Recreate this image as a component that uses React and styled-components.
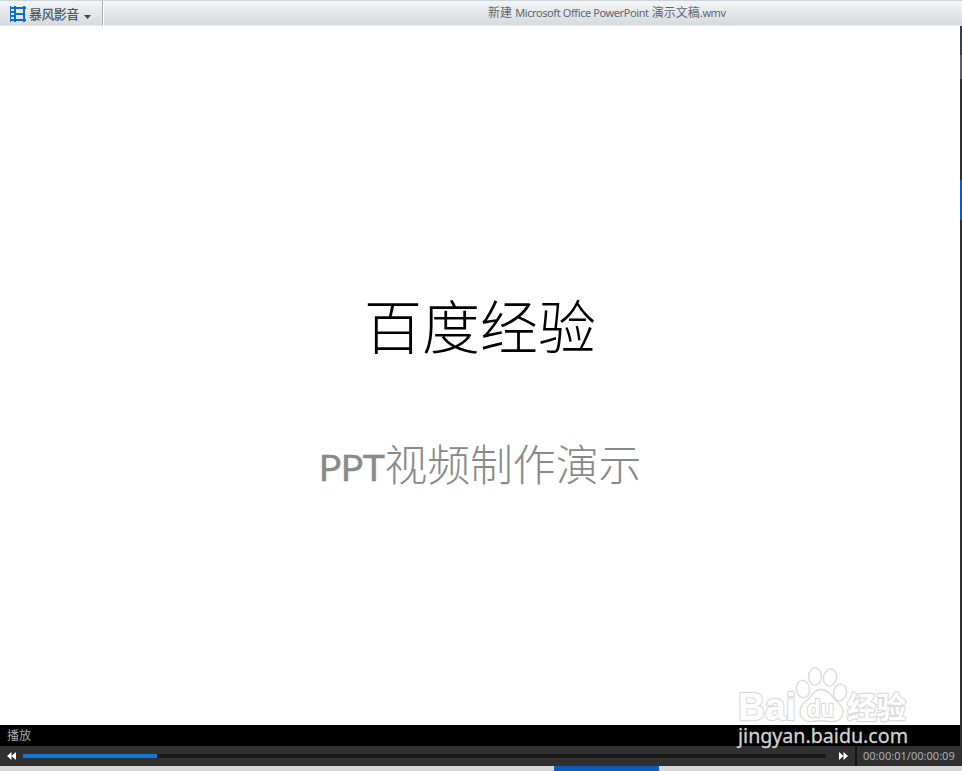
import React from "react";
import styled, { createGlobalStyle, ThemeProvider } from "styled-components";

const theme = {
    colours: {
        black: "#000",
        white: "#fff",
        blue1: "#0c5bbd",
        blue2: "#1178d3",
        grey1: "#d6d6d6",
        grey2: "#898989",
        grey3: "#303030",
        outline: "#dadada",
        text: "#4c5663",
    },
    fonts: {
        ui: `"Noto Sans", "Noto Sans CJK SC", sans-serif`,
        slide: `Lato, "Noto Sans CJK SC", sans-serif`,
    },
};

const GlobalStyle = createGlobalStyle`
  * {
    box-sizing: border-box;
  }
  body {
    margin: 0;
    overflow: hidden;
  }
`;

const Player = styled.div`
  background: ${({ theme }) => theme.colours.white};
  display: flex;
  flex-direction: column;
  font-family: ${({ theme }) => theme.fonts.ui};
  height: 771px;
  position: relative;
  width: 962px;
`;

const TitleBar = styled.header`
  background: linear-gradient(#f4f5f6, #d5dade);
  border-bottom: 1px solid #e2e6e9;
  border-top: 1px solid #ccd3d9;
  display: flex;
  flex: 0 0 26px;
`;

const Brand = styled.div`
  align-items: center;
  border-right: 1px solid #aaafb5;
  box-shadow: 1px 0 ${({ theme }) => theme.colours.white};
  color: ${({ theme }) => theme.colours.text};
  display: flex;
  padding: 2px 0 0 10px;
  width: 103px;
`;

const BrandName = styled.span`
  font-size: 13px;
  font-weight: 500;
  letter-spacing: -0.6px;
  line-height: 20px;
  margin: 0 5px 0 3px;
`;

const FileName = styled.div`
  color: #606671;
  font-size: 12px;
  line-height: 24px;
  padding-left: 385px;
  white-space: nowrap;
`;

const Run = styled.span`
  font-size: 11px;
  letter-spacing: ${({ tracking }) => tracking}px;
`;

const Content = styled.div`
  display: flex;
  flex: 0 0 740px;
`;

const Main = styled.div`
  display: flex;
  flex: 1;
  flex-direction: column;
`;

const Slide = styled.main`
  align-items: center;
  display: flex;
  flex: 0 0 699px;
  flex-direction: column;
  font-family: ${({ theme }) => theme.fonts.slide};
  padding-top: 261px;
`;

const SlideTitle = styled.h1`
  color: ${({ theme }) => theme.colours.black};
  font-size: 58px;
  font-weight: 300;
  line-height: 80px;
  margin: 0 0 66px;
`;

const SlideSubtitle = styled.p`
  align-items: baseline;
  color: ${({ theme }) => theme.colours.grey2};
  display: flex;
  font-size: 42.8px;
  font-weight: 300;
  line-height: 64px;
  margin: 0;
`;

const Latin = styled.span`
  font-size: 37.5px;
  font-weight: 400;
  letter-spacing: -0.5px;
  -webkit-text-stroke: 0.4px ${({ theme }) => theme.colours.grey2};
`;

const StatusBar = styled.div`
  background: ${({ theme }) => theme.colours.black};
  color: #aaa;
  flex: 0 0 21px;
  font-size: 12px;
  line-height: 20px;
  padding: 1px 0 0 7px;
`;

const Controls = styled.div`
  align-items: center;
  background: ${({ theme }) => theme.colours.grey3};
  display: flex;
  flex: 0 0 20px;
  padding-left: 7px;
`;

const Track = styled.div`
  background: #191919;
  border-bottom: 1px solid #353535;
  height: 5px;
  margin: 0 12px 0 6px;
  width: 803px;
`;

const Progress = styled.div`
  background: ${({ theme }) => theme.colours.blue2};
  height: 4px;
`;

const Time = styled.div`
  border-left: 2px solid #151515;
  color: #aab0b5;
  font-size: 11px;
  height: 20px;
  letter-spacing: 0.02px;
  line-height: 20px;
  margin-left: 7px;
  padding-left: 6px;
  white-space: nowrap;
`;

const Edge = styled.div`
  display: flex;
  flex: 0 0 2px;
  flex-direction: column;
`;

const EdgePart = styled.div`
  background: ${({ background }) => background};
  flex: 0 0 ${({ size }) => size}px;
`;

const Footer = styled.footer`
  background: ${({ theme }) => theme.colours.grey1};
  border-bottom: 1px solid #f0f0f0;
  flex: 0 0 5px;
  padding-left: 554px;
`;

const FooterTab = styled.div`
  background: ${({ theme }) => theme.colours.blue1};
  height: 5px;
  width: 105px;
`;

const WatermarkSvg = styled.svg`
  left: 725px;
  position: absolute;
  top: 655px;
`;

const FilmIcon = () => (
    <svg width="16" height="16" viewBox="0 0 16 16" shapeRendering="crispEdges">
        <path
            fill="#126bc5"
            d="M4 0h2v16H4zM13 0h2v16h-2zM6 1h7v2H6zM6 7h7v2H6zM6 13h7v2H6zM0 1h4v2H0zM0 5h4v2H0zM0 9h4v2H0zM0 13h4v2H0zM15 1h1v2h-1zM15 13h1v2h-1z"
        />
        <path fill="#126bc5" d="M0 0h1v16H0z" />
    </svg>
);

const Caret = () => (
    <svg width="7" height="4" viewBox="0 0 7 4" style={{ marginTop: 6 }}>
        <path fill="#404951" d="M0 0h7L3.5 4z" />
    </svg>
);

const Skip = ({ forward }) => (
    <svg width="10" height="8" viewBox="0 0 10 8">
        <path
            fill="#fff"
            d={forward ? "M1 0l4.500 4L1 8zM5.500 0L10 4 5.500 8z" : "M4.500 0v8L0 4zM9 0v8L4.500 4z"}
        />
    </svg>
);

const Watermark = () => (
    <WatermarkSvg width="190" height="96" viewBox="0 0 190 96">
        <g fill="#fff" stroke={theme.colours.outline} strokeWidth="1.4">
            <ellipse cx="90" cy="21.5" rx="6.3" ry="8.8" />
            <ellipse cx="105" cy="22.5" rx="6.5" ry="8.7" transform="rotate(12 105 22.5)" />
            <ellipse cx="78" cy="34" rx="6.5" ry="8.8" transform="rotate(-10 78 34)" />
            <ellipse cx="115" cy="37.5" rx="6.5" ry="8.6" transform="rotate(12 115 37.5)" />
            <path d="M96 34.5c-7 0-9 6-13 10-5 4-8.5 7-8 13 .5 7 6 10 13 9 5-1 10-1 16 0 8 1 14-2 14-10 0-5-4-8-8-12s-7-10-14-10z" />
        </g>
        <g
            fill="#fff"
            stroke={theme.colours.outline}
            strokeWidth="2.4"
            paintOrder="stroke"
            strokeLinejoin="round"
            fontFamily="Liberation Sans, sans-serif"
            fontWeight="700"
        >
            <text x="13" y="65" fontSize="39" textLength="58" lengthAdjust="spacingAndGlyphs">
                Bai
            </text>
            <text x="82" y="61.5" fontSize="24" textLength="27" lengthAdjust="spacingAndGlyphs">
                du
            </text>
            <text
                x="122"
                y="63"
                fontSize="30"
                fontFamily="Noto Sans CJK SC, sans-serif"
                textLength="59"
                lengthAdjust="spacingAndGlyphs"
            >
                经验
            </text>
        </g>
        <text
            x="13"
            y="88"
            fill="#d2d2d2"
            stroke="#d2d2d2"
            strokeWidth="0.3"
            fontSize="20"
            fontFamily="Noto Sans, sans-serif"
            textLength="170"
            lengthAdjust="spacingAndGlyphs"
        >
            jingyan.baidu.com
        </text>
    </WatermarkSvg>
);

const edgeParts = [
    { size: 29, background: "#3a3f43" },
    { size: 24, background: "#5b5e65" },
    { size: 101, background: "#2d2f31" },
    { size: 40, background: theme.colours.blue1 },
    { size: 546, background: "#302e31" },
];

const App = () => {
    const played = 134;
    const duration = 803;

    return (
        <ThemeProvider theme={theme}>
            <GlobalStyle />
            <Player>
                <TitleBar>
                    <Brand>
                        <FilmIcon />
                        <BrandName>暴风影音</BrandName>
                        <Caret />
                    </Brand>
                    <FileName>
                        新建 <Run tracking={-0.4}>Microsoft Office PowerPoint</Run>{" "}
                        演示文稿<Run tracking={-0.4}>.wmv</Run>
                    </FileName>
                </TitleBar>
                <Content>
                    <Main>
                        <Slide>
                            <SlideTitle>百度经验</SlideTitle>
                            <SlideSubtitle>
                                <Latin>PPT</Latin>视频制作演示
                            </SlideSubtitle>
                        </Slide>
                        <StatusBar>播放</StatusBar>
                        <Controls>
                            <Skip />
                            <Track>
                                <Progress style={{ width: `${(played / duration) * 100}%` }} />
                            </Track>
                            <Skip forward />
                            <Time>00:00:01/00:00:09</Time>
                        </Controls>
                    </Main>
                    <Edge>
                        {edgeParts.map((part, i) => (
                            <EdgePart key={i} {...part} />
                        ))}
                    </Edge>
                </Content>
                <Footer>
                    <FooterTab />
                </Footer>
                <Watermark />
            </Player>
        </ThemeProvider>
    );
};

export default App;
